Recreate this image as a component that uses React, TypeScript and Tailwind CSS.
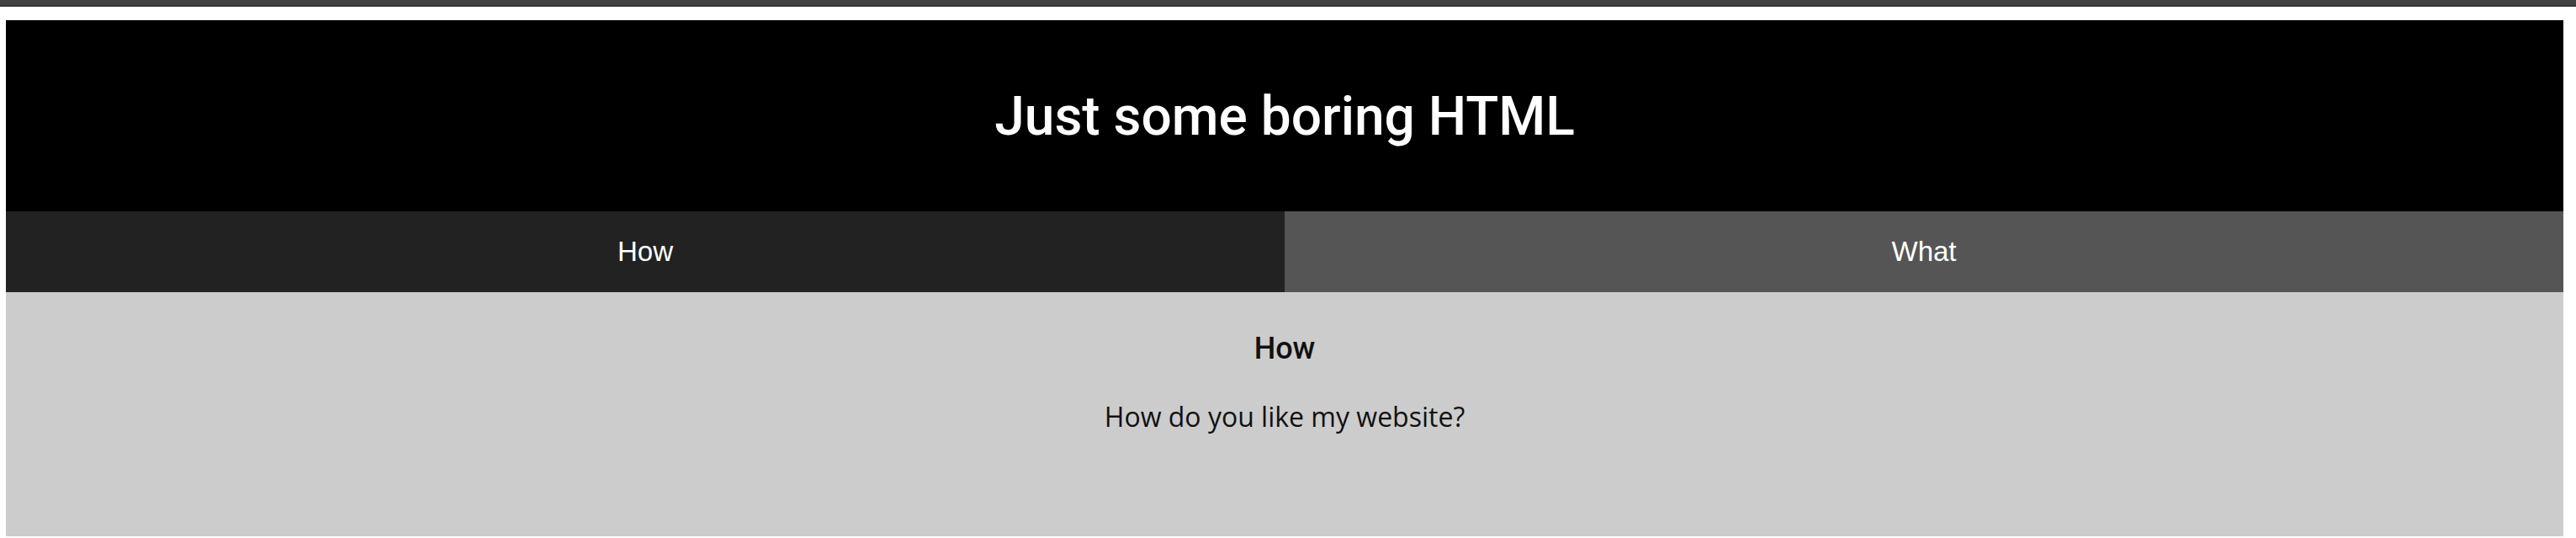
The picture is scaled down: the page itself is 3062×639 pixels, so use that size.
import React, { useState } from 'react';

const tabs = [
  { id: 'how', label: 'How', title: 'How', text: 'How do you like my website?' },
  { id: 'what', label: 'What', title: 'What', text: 'What is this website about?' },
];

function App() {
  const [active, setActive] = useState('how');
  const current = tabs.find((t) => t.id === active) ?? tabs[0];

  return (
    <div className="min-h-screen bg-white">
      {/* top strip */}
      <div className="h-[8px] bg-[#424242] border-b-2 border-[#363636]" />

      <main className="ml-[7px] mt-[16px] w-[3040px]">
        <header className="flex h-[227px] items-center justify-center bg-black pt-[3px]">
          <h1 className="font-['Roboto',sans-serif] text-[64px] font-medium text-white">Just some boring HTML</h1>
        </header>

        <nav className="grid h-[96px] grid-cols-2">
          {tabs.map((tab) => (
            <button
              key={tab.id}
              onClick={() => setActive(tab.id)}
              className={`flex items-center justify-center font-['Liberation_Sans',Arial,sans-serif] text-[33px] text-white ${
                active === tab.id ? 'bg-[#222222]' : 'bg-[#555555]'
              }`}
            >
              {tab.label}
            </button>
          ))}
        </nav>

        <section className="h-[290px] bg-[#cccccc] pt-[46px] text-center">
          <h2 className="font-['Roboto',sans-serif] text-[36px] leading-[42px] font-medium text-[#111111]">
            {current.title}
          </h2>
          <p className="mt-[38px] font-['Open_Sans',sans-serif] text-[32px] leading-[44px] text-[#111111]">
            {current.text}
          </p>
        </section>
      </main>
    </div>
  );
}

export default App;
